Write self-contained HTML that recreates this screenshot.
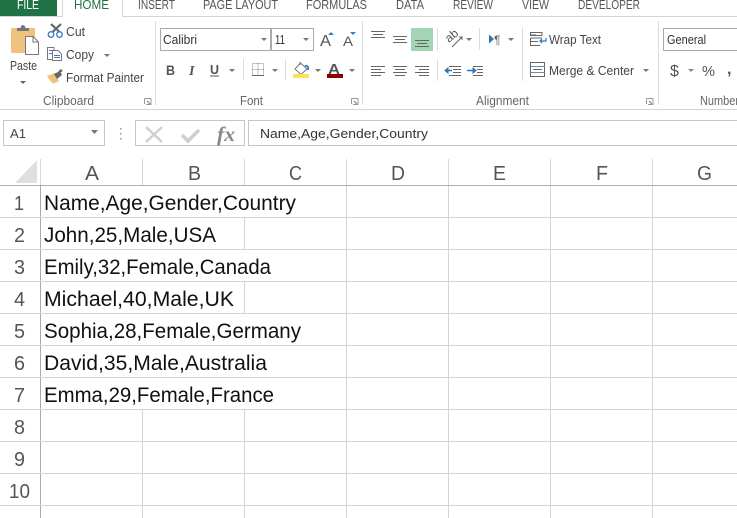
<!DOCTYPE html>
<html><head><meta charset="utf-8"><style>
html,body{margin:0;padding:0;background:#fff;overflow:hidden}
svg{display:block}
text{font-family:"Liberation Sans",sans-serif;fill:#444}
.t{font-size:13px;fill:#444}
.tab{font-size:13px;fill:#555}
.g{font-size:12.500px;fill:#666}
.c{font-size:21px;fill:#111}
.h{font-size:20px;fill:#555}
.b{fill:#777}
</style></head><body>
<svg width="737" height="518" viewBox="0 0 737 518" xmlns="http://www.w3.org/2000/svg">
<rect width="737" height="518" fill="#fff"/>
<!-- tabs -->
<rect x="0" y="0" width="57" height="17" fill="#217346"/>
<text x="17" y="9" class="tab" style="fill:#fff" textLength="22" lengthAdjust="spacingAndGlyphs">FILE</text>
<rect x="0" y="16" width="737" height="1" fill="#d4d4d4"/>
<path d="M62.500 0V16.500M122.500 0V16.500" stroke="#d4d4d4" fill="none"/>
<rect x="63" y="15" width="59" height="3" fill="#fff"/>
<text x="74" y="9" class="tab" style="fill:#217346" textLength="35" lengthAdjust="spacingAndGlyphs">HOME</text>
<text x="138" y="9" class="tab" textLength="37" lengthAdjust="spacingAndGlyphs">INSERT</text>
<text x="203" y="9" class="tab" textLength="75" lengthAdjust="spacingAndGlyphs">PAGE LAYOUT</text>
<text x="306" y="9" class="tab" textLength="61" lengthAdjust="spacingAndGlyphs">FORMULAS</text>
<text x="396" y="9" class="tab" textLength="28" lengthAdjust="spacingAndGlyphs">DATA</text>
<text x="453" y="9" class="tab" textLength="40" lengthAdjust="spacingAndGlyphs">REVIEW</text>
<text x="522" y="9" class="tab" textLength="27" lengthAdjust="spacingAndGlyphs">VIEW</text>
<text x="578" y="9" class="tab" textLength="62" lengthAdjust="spacingAndGlyphs">DEVELOPER</text>
<!-- group separators and ribbon bottom -->
<path d="M155.500 21V105M362.500 21V105M658.500 21V105" stroke="#dcdcdc"/>
<rect x="0" y="109" width="737" height="1" fill="#d4d4d4"/>
<!-- clipboard -->
<rect x="11" y="28" width="24" height="25" rx="1.500" fill="#eec27f"/>
<path d="M17 31V28H20.500Q21 25 23 25Q25 25 25.500 28H29V31Z" fill="#777"/>
<path d="M25.500 36.500H33L38.500 42V54.500H25.500Z" fill="#fff" stroke="#777"/>
<path d="M33 36.500V42H38.500" fill="none" stroke="#777"/>
<text x="10" y="70" class="t" textLength="27" lengthAdjust="spacingAndGlyphs">Paste</text>
<path d="M20 81H26L23 84Z" fill="#666"/>
<!-- cut -->
<path d="M51 24L59.500 32M61 24L52.500 32" stroke="#666" stroke-width="2.200" fill="none"/>
<circle cx="51" cy="34.500" r="2.800" fill="none" stroke="#3a7cbd" stroke-width="1.300"/>
<circle cx="59.500" cy="34.500" r="2.800" fill="none" stroke="#3a7cbd" stroke-width="1.300"/>
<text x="66" y="36" class="t" textLength="19" lengthAdjust="spacingAndGlyphs">Cut</text>
<!-- copy -->
<path d="M47.500 47.500H54V59.500H47.500Z" fill="#fff" stroke="#777"/>
<path d="M49 50.500H52M49 53.500H52" stroke="#3a7cbd"/>
<path d="M52.500 50.500H58L61.500 54V60.500H52.500Z" fill="#fff" stroke="#777"/>
<path d="M54 55.500H60M54 57.500H60" stroke="#3a7cbd"/>
<text x="66" y="59" class="t" textLength="28" lengthAdjust="spacingAndGlyphs">Copy</text>
<path d="M104 54H110L107 57Z" fill="#777"/>
<!-- format painter -->
<path d="M47 76L55 73L59 81Q54 84 52 83Z" fill="#eec27f"/>
<path d="M54 74L60 71L62 75L57 79Z" fill="#666"/>
<path d="M59 72L62 70" stroke="#666" stroke-width="2.500"/>
<text x="66" y="82" class="t" textLength="78" lengthAdjust="spacingAndGlyphs">Format Painter</text>
<text x="43" y="105" class="g" textLength="51" lengthAdjust="spacingAndGlyphs">Clipboard</text>
<path d="M144.500 98.500H151M144.500 98.500V104M151 98.500V104.500H146" fill="none" stroke="#999"/>
<path d="M147 101L150 104" stroke="#777"/>
<!-- font -->
<rect x="160.500" y="28.500" width="110" height="22" fill="#fff" stroke="#aaa"/>
<rect x="271.500" y="28.500" width="42" height="22" fill="#fff" stroke="#aaa"/>
<text x="163" y="44" class="t" style="fill:#333" textLength="34" lengthAdjust="spacingAndGlyphs">Calibri</text>
<text x="275" y="44" class="t" style="fill:#333" textLength="10" lengthAdjust="spacingAndGlyphs">11</text>
<path d="M261 38H267L264 41ZM303 38H309L306 41Z" fill="#777"/>
<text x="320" y="46" style="font-size:16px;fill:#555" textLength="11" lengthAdjust="spacingAndGlyphs">A</text>
<path d="M328 35H334L331 32Z" fill="#3a7cbd"/>
<text x="343" y="46" style="font-size:14px;fill:#555" textLength="10" lengthAdjust="spacingAndGlyphs">A</text>
<path d="M350 32H356L353 35Z" fill="#3a7cbd"/>
<text x="166" y="75" style="font-size:14px;font-weight:bold;fill:#555" textLength="9" lengthAdjust="spacingAndGlyphs">B</text>
<text x="189" y="75" style="font-size:14px;font-style:italic;font-family:'Liberation Serif',serif;font-weight:bold;fill:#555">I</text>
<text x="210" y="74" style="font-size:13px;font-weight:bold;fill:#555" textLength="9" lengthAdjust="spacingAndGlyphs">U</text>
<rect x="210" y="75.500" width="9" height="1" fill="#555"/>
<path d="M229 69H235L232 72Z" fill="#777"/>
<path d="M243.500 59V80M285.500 59V80" stroke="#dcdcdc"/>
<path d="M252.500 63.500H263.500V75.500H252.500ZM258 63.500V75.500M252.500 69.500H263.500" fill="none" stroke="#888" stroke-dasharray="1 1"/>
<path d="M252 75.500H264" stroke="#666"/>
<path d="M272 69H278L275 72Z" fill="#777"/>
<path d="M295 69L300.500 63L307 69L301 74.500Z" fill="#fff" stroke="#777"/>
<path d="M300 62V65" stroke="#777"/>
<path d="M305 66Q309 65 308 70" stroke="#3a7cbd" stroke-width="1.800" fill="none"/>
<rect x="293" y="74" width="16" height="4" fill="#ffe155"/>
<path d="M315 69H321L318 72Z" fill="#777"/>
<text x="328" y="74" style="font-size:15px;font-weight:bold;fill:#555" textLength="12" lengthAdjust="spacingAndGlyphs">A</text>
<rect x="327" y="74" width="16" height="4" fill="#8b0000"/>
<path d="M349 69H355L352 72Z" fill="#777"/>
<text x="240" y="105" class="g" textLength="23" lengthAdjust="spacingAndGlyphs">Font</text>
<path d="M351.500 98.500H358M351.500 98.500V104M358 98.500V104.500H353" fill="none" stroke="#999"/>
<path d="M354 101L357 104" stroke="#777"/>
<!-- alignment -->
<g stroke="#666" fill="none">
<path d="M371 31.500H385M373 34.500H383M371 37.500H385" stroke-width="1"/>
<path d="M393 36.500H407M395 39.500H405M393 42.500H407"/>
<rect x="411" y="28" width="22" height="23" fill="#a3d4b3" stroke="none"/>
<path d="M415 40.500H429M417 43.500H427M415 46.500H429"/>
<path d="M371 66.500H385M371 69.500H381M371 72.500H385M371 75.500H381"/>
<path d="M393 66.500H407M395 69.500H405M393 72.500H407M395 75.500H405"/>
<path d="M415 66.500H429M419 69.500H429M415 72.500H429M419 75.500H429"/>
<path d="M449 66.500H461M453 69.500H461M453 72.500H461M449 75.500H461"/>
<path d="M473 66.500H483M477 69.500H483M477 72.500H483M473 75.500H483"/>
</g>
<path d="M445 70.500H452M467 70.500H474" stroke="#2f74b5" stroke-width="1.500"/>
<path d="M445 70.500L448 68V73ZM476 70.500L473 68V73Z" fill="#2f74b5" stroke="#2f74b5"/>
<path d="M437.500 28V50M437.500 59V81M479.500 28V50" stroke="#dcdcdc"/>
<text x="0" y="0" transform="translate(449 43) rotate(-40)" style="font-size:12px;fill:#555">ab</text>
<path d="M452 47L462 37M459 37H462V40" stroke="#666" fill="none"/>
<path d="M466 38H472L469 41Z" fill="#777"/>
<path d="M489 34.500L494 39L489 43.500Z" fill="#2f74b5"/>
<text x="494" y="44" style="font-size:12px;fill:#666">¶</text>
<path d="M508 38H514L511 41Z" fill="#777"/>
<path d="M522.500 27V81" stroke="#dcdcdc"/>
<text x="476" y="105" class="g" textLength="53" lengthAdjust="spacingAndGlyphs">Alignment</text>
<path d="M646.500 98.500H653M646.500 98.500V104M653 98.500V104.500H648" fill="none" stroke="#999"/>
<path d="M649 101L652 104" stroke="#777"/>
<!-- wrap / merge -->
<path d="M530.500 32.500H542V35.500H530.500ZM530.500 38H542M530.500 38V45.500H540M530.500 41.500H538" fill="none" stroke="#666"/>
<path d="M530.500 35H536" stroke="#2f74b5"/>
<path d="M546 38V41H540M542 39L540 41L542 43" fill="none" stroke="#2f74b5" stroke-width="1.200"/>
<text x="549" y="44" class="t" textLength="52" lengthAdjust="spacingAndGlyphs">Wrap Text</text>
<rect x="530.500" y="62.500" width="14" height="14" fill="none" stroke="#666"/>
<path d="M530.500 66.500H544.500M530.500 72.500H544.500" stroke="#888"/>
<path d="M533 69.500H542" stroke="#2f74b5"/>
<text x="549" y="75" class="t" textLength="85" lengthAdjust="spacingAndGlyphs">Merge &amp; Center</text>
<path d="M643 69H649L646 72Z" fill="#777"/>
<!-- number -->
<rect x="663.500" y="28.500" width="80" height="22" fill="#fff" stroke="#aaa"/>
<text x="667" y="44" class="t" style="fill:#333" textLength="39" lengthAdjust="spacingAndGlyphs">General</text>
<text x="670" y="76" style="font-size:16px;fill:#555">$</text>
<path d="M688 69H694L691 72Z" fill="#888"/>
<text x="702" y="76" style="font-size:15px;fill:#555" textLength="13" lengthAdjust="spacingAndGlyphs">%</text>
<text x="727" y="74" style="font-size:16px;font-weight:bold;fill:#555">,</text>
<text x="700" y="105" class="g" textLength="39" lengthAdjust="spacingAndGlyphs">Number</text>
<!-- formula bar -->
<rect x="3.500" y="120.500" width="101" height="25" fill="#fff" stroke="#c6c6c6"/>
<text x="10" y="138" class="t" textLength="16" lengthAdjust="spacingAndGlyphs">A1</text>
<path d="M91 130H98L94.500 134Z" fill="#777"/>
<path d="M120 128h1.500v1.500H120zM120 133h1.500v1.500H120zM120 138h1.500v1.500H120z" fill="#999"/>
<rect x="135.500" y="120.500" width="109" height="25" fill="#fff" stroke="#c6c6c6"/>
<rect x="248.500" y="120.500" width="490" height="25" fill="#fff" stroke="#c6c6c6"/>
<path d="M146 127L162 142M162 127L146 142" stroke="#cfcfcf" stroke-width="2.500"/>
<path d="M182 135L188 141L199 130" stroke="#cfcfcf" stroke-width="3.500" fill="none"/>
<text x="217" y="141" style="font-family:'Liberation Serif',serif;font-size:21px;font-style:italic;font-weight:bold;fill:#888" textLength="18" lengthAdjust="spacingAndGlyphs">fx</text>
<text x="260" y="138" class="t" style="fill:#333" textLength="168" lengthAdjust="spacingAndGlyphs">Name,Age,Gender,Country</text>
<!-- grid header -->
<path d="M37 160V183H15Z" fill="#dfdfdf"/>
<path d="M40.500 159V185M142.500 159V185M244.500 159V185M346.500 159V185M448.500 159V185M550.500 159V185M652.500 159V185" stroke="#d8d8d8"/>
<rect x="0" y="185" width="737" height="1" fill="#b0b0b0"/>
<rect x="40" y="185" width="1" height="333" fill="#aaa"/>
<text x="85" y="180" class="h" textLength="14" lengthAdjust="spacingAndGlyphs">A</text>
<text x="188" y="180" class="h" textLength="13" lengthAdjust="spacingAndGlyphs">B</text>
<text x="289" y="180" class="h" textLength="13" lengthAdjust="spacingAndGlyphs">C</text>
<text x="391" y="180" class="h" textLength="14" lengthAdjust="spacingAndGlyphs">D</text>
<text x="493" y="180" class="h" textLength="13" lengthAdjust="spacingAndGlyphs">E</text>
<text x="596" y="180" class="h" textLength="12" lengthAdjust="spacingAndGlyphs">F</text>
<text x="697" y="180" class="h" textLength="15" lengthAdjust="spacingAndGlyphs">G</text>
<!-- row lines -->
<g fill="#d4d4d4">
<rect x="0" y="217" width="737" height="1"/><rect x="0" y="249" width="737" height="1"/><rect x="0" y="281" width="737" height="1"/><rect x="0" y="313" width="737" height="1"/><rect x="0" y="345" width="737" height="1"/><rect x="0" y="377" width="737" height="1"/><rect x="0" y="409" width="737" height="1"/><rect x="0" y="441" width="737" height="1"/><rect x="0" y="473" width="737" height="1"/><rect x="0" y="505" width="737" height="1"/>
</g>
<!-- vertical gridlines -->
<g stroke="#d4d4d4">
<path d="M346.500 186V518M448.500 186V518M550.500 186V518M652.500 186V518"/>
<path d="M142.500 410V518M244.500 410V518M244.500 218V249M244.500 282V313"/>
</g>
<!-- row headers -->
<text x="14" y="210" class="h" textLength="10" lengthAdjust="spacingAndGlyphs">1</text>
<text x="14" y="242" class="h" textLength="11" lengthAdjust="spacingAndGlyphs">2</text>
<text x="14" y="274" class="h" textLength="11" lengthAdjust="spacingAndGlyphs">3</text>
<text x="14" y="306" class="h" textLength="11" lengthAdjust="spacingAndGlyphs">4</text>
<text x="14" y="338" class="h" textLength="11" lengthAdjust="spacingAndGlyphs">5</text>
<text x="14" y="370" class="h" textLength="11" lengthAdjust="spacingAndGlyphs">6</text>
<text x="14" y="402" class="h" textLength="11" lengthAdjust="spacingAndGlyphs">7</text>
<text x="14" y="434" class="h" textLength="11" lengthAdjust="spacingAndGlyphs">8</text>
<text x="14" y="466" class="h" textLength="11" lengthAdjust="spacingAndGlyphs">9</text>
<text x="9" y="498" class="h" textLength="21" lengthAdjust="spacingAndGlyphs">10</text>
<!-- cells -->
<text x="44" y="210" class="c" textLength="252" lengthAdjust="spacingAndGlyphs">Name,Age,Gender,Country</text>
<text x="44" y="242" class="c" textLength="172" lengthAdjust="spacingAndGlyphs">John,25,Male,USA</text>
<text x="44" y="274" class="c" textLength="227" lengthAdjust="spacingAndGlyphs">Emily,32,Female,Canada</text>
<text x="44" y="306" class="c" textLength="190" lengthAdjust="spacingAndGlyphs">Michael,40,Male,UK</text>
<text x="44" y="338" class="c" textLength="257" lengthAdjust="spacingAndGlyphs">Sophia,28,Female,Germany</text>
<text x="44" y="370" class="c" textLength="223" lengthAdjust="spacingAndGlyphs">David,35,Male,Australia</text>
<text x="44" y="402" class="c" textLength="230" lengthAdjust="spacingAndGlyphs">Emma,29,Female,France</text>
</svg>
</body></html>
